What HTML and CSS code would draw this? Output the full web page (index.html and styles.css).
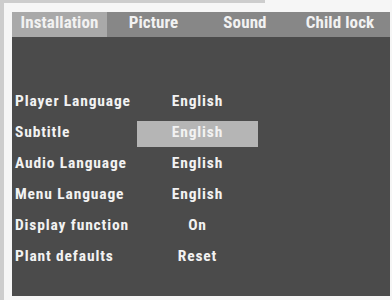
FILE: index.html
```html
<!DOCTYPE html>
<html>
<head>
<meta charset="utf-8">
<link rel="stylesheet" href="styles.css">
</head>
<body>
<div class="frame">
  <div class="topstrip"></div>
  <div class="panel">
    <div class="tabs">
      <div class="tab active">Installation</div>
      <div class="tab">Picture</div>
      <div class="tab">Sound</div>
      <div class="tab">Child lock</div>
    </div>
    <div class="rows">
      <div class="row"><span class="label">Player Language</span><span class="value">English</span></div>
      <div class="row"><span class="label">Subtitle</span><span class="value selected">English</span></div>
      <div class="row"><span class="label">Audio Language</span><span class="value">English</span></div>
      <div class="row"><span class="label">Menu Language</span><span class="value">English</span></div>
      <div class="row"><span class="label">Display function</span><span class="value">On</span></div>
      <div class="row"><span class="label">Plant defaults</span><span class="value">Reset</span></div>
    </div>
  </div>
</div>
</body>
</html>
```
FILE: styles.css
```css
html, body {
  margin: 0;
  padding: 0;
  background: #f6f6f6;
}
body {
  width: 392px;
  height: 300px;
  overflow: hidden;
  font-family: "Roboto Condensed", "Open Sans Condensed", "Liberation Sans", sans-serif;
  font-weight: bold;
  color: #f2f2f2;
}
.frame {
  border-left: 4px solid #cdcdcd;
  height: 300px;
  box-sizing: border-box;
}
.topstrip {
  width: 261px;
  height: 3px;
  background: #cdcdcd;
}
.panel {
  margin: 9px 2px 0 8px;
  height: 284px;
  background: #4b4b4b;
}
.tabs {
  display: grid;
  grid-template-columns: 95px 93px 90px 100px;
  height: 25px;
  background: #878787;
}
.tab {
  font-size: 17px;
  line-height: 21px;
  text-align: center;
  letter-spacing: 0.1px;
  white-space: nowrap;
}
.tab.active {
  background: #a9a9a9;
}
.rows {
  padding: 53px 0 0 3px;
  display: flex;
  flex-direction: column;
  gap: 5.3px;
}
.row {
  display: grid;
  grid-template-columns: 122px 121px;
  height: 25.7px;
  font-size: 15.5px;
  line-height: 23px;
  letter-spacing: 0.85px;
  white-space: nowrap;
}
.value {
  text-align: center;
}
.value.selected {
  background: #b5b5b5;
}
```
